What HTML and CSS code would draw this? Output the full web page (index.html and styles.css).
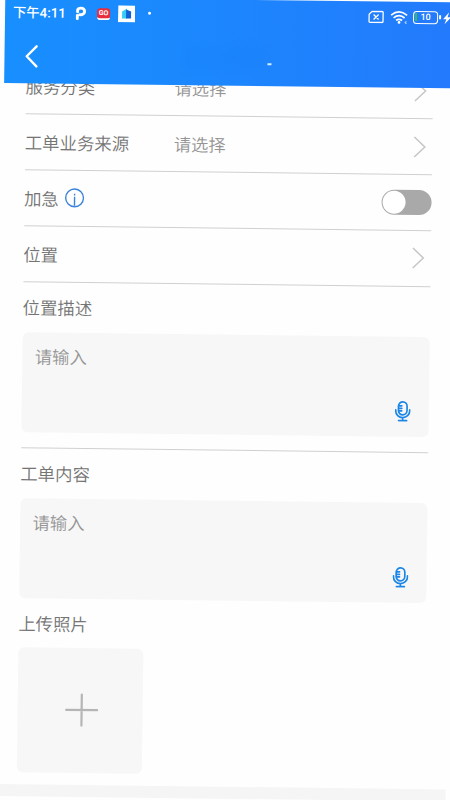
FILE: index.html
```html
<!DOCTYPE html>
<html lang="zh-CN">
<head>
<meta charset="utf-8">
<title>工单</title>
<link rel="stylesheet" href="styles.css">
</head>
<body>
<div class="screen">
  <header class="header">
    <div class="status">
      <span class="time">下午4:11</span>
      <svg class="app-p" width="12" height="15" viewBox="0 0 12 15"><path d="M2.300 12.800V9.500M2.500 6V4.500Q2.500 2.200 6 2.200a3.500 3.300 0 0 1 0 6.600H4.800" fill="none" stroke="#fff" stroke-width="2.900" stroke-linecap="round"/></svg>
      <span class="app-red">GO</span>
      <svg class="app-building" width="17" height="17" viewBox="0 0 17 17"><path fill="#fff" d="M0 0h17v17H0z"/><path fill="#35cdf5" d="M4 6l5-3v10H4z"/><path fill="#1261d4" d="M8 4l5 2v7H8z"/></svg>
      <span class="dot"></span>
      <span class="grow"></span>
      <svg class="sim" width="16" height="13" viewBox="0 0 16 13"><path d="M4 1h10q1 0 1 1v9q0 1-1 1H2q-1 0-1-1V4zM5.500 4l5 5M10.500 4l-5 5" fill="none" stroke="#fff" stroke-width="1.300"/></svg>
      <svg class="wifi" width="18" height="14" viewBox="0 0 18 14"><path d="M1 4.500q8-6.600 16 0M3.500 7.200q5.500-4.600 11 0M6 9.700q3-2.300 6 0" fill="none" stroke="#fff" stroke-width="1.700"/><circle cx="9" cy="11.700" r="1.400" fill="#fff"/><path d="M16.500 10.500l-1.500 1.300 1.500 1.300" fill="none" stroke="#b9d8ff"/></svg>
      <span class="battery">10</span>
      <svg class="bolt" width="8" height="12" viewBox="0 0 8 12"><path d="M6 0L0 7h3.300L1.500 12 8 5H4.500z" fill="#fff"/></svg>
    </div>
    <div class="navbar">
      <svg width="14" height="24" viewBox="0 0 14 24"><path d="M12 2L2.200 12 12 22" fill="none" stroke="#fff" stroke-width="2.400" stroke-linecap="round" stroke-linejoin="round"/></svg>
      <span class="smudge"></span>
      <span class="dash"></span>
    </div>
  </header>
  <main class="form">
    <div class="row"><span class="label">服务分类</span><span class="value">请选择</span>
      <svg class="arrow" width="13" height="22" viewBox="0 0 13 22"><path d="M1 1l10.500 10L1 21" /></svg></div>
    <div class="row"><span class="label">工单业务来源</span><span class="value">请选择</span>
      <svg class="arrow" width="13" height="22" viewBox="0 0 13 22"><path d="M1 1l10.500 10L1 21" /></svg></div>
    <div class="row"><span class="label urgent"><span>加急</span>
      <svg class="info" width="20" height="20" viewBox="0 0 20 20"><circle cx="10" cy="10" r="8.900"/><path d="M10 9v9M10 6v1.700"/></svg></span>
      <span class="switch"><span class="knob"></span></span></div>
    <div class="row"><span class="label">位置</span><span class="value"></span>
      <svg class="arrow" width="13" height="22" viewBox="0 0 13 22"><path d="M1 1l10.500 10L1 21" /></svg></div>
    <section class="block ruled">
      <div class="title">位置描述</div>
      <div class="input"><span>请输入</span>
        <svg class="mic" width="16" height="21" viewBox="0 0 16 21"><rect x="3.700" y="1" width="8.600" height="13" rx="4.300"/><path d="M1 9v1.200a7 6.500 0 0 0 14 0V9M8 16.700v3M4 19.800h8M4 5h3M4 7.500h3M4 10h3"/></svg></div>
    </section>
    <section class="block">
      <div class="title">工单内容</div>
      <div class="input"><span>请输入</span>
        <svg class="mic" width="16" height="21" viewBox="0 0 16 21"><rect x="3.700" y="1" width="8.600" height="13" rx="4.300"/><path d="M1 9v1.200a7 6.500 0 0 0 14 0V9M8 16.700v3M4 19.800h8M4 5h3M4 7.500h3M4 10h3"/></svg></div>
    </section>
    <section class="photos">
      <div class="title">上传照片</div>
      <div class="upload"><svg width="34" height="34" viewBox="0 0 34 34"><path d="M17 1.500v31M1.500 17h31" fill="none" stroke="#b5b5b5" stroke-width="2.200" stroke-linecap="round"/></svg></div>
    </section>
  </main>
  <div class="footer"></div>
</div>
</body>
</html>
```
FILE: styles.css
```css
* { box-sizing: border-box; }
html, body { margin: 0; height: 800px; overflow: hidden; background: #fefefe; }
body { font-family: "Noto Sans CJK SC", sans-serif; font-weight: 350; }
svg { display: block; flex: none; }

/* The whole screen is tilted slightly clockwise. */
.screen {
  width: 451px;
  height: 815px;
  transform-origin: 0 0;
  transform: matrix(1, 0.012, -0.0136, 1, 5.3, -3);
}

.header {
  position: relative;
  z-index: 1;
  height: 86px;
  background: linear-gradient(90deg, #188fff, #1c87fe 45%, #237afc);
}
.status {
  display: flex;
  align-items: center;
  height: 32px;
  padding-left: 8px;
  color: #fff;
}
.time { width: 52px; margin-top: -1px; font: 500 13.300px/18px Roboto, "Noto Sans CJK SC", sans-serif; white-space: nowrap; }
.app-p { margin: -2px 0 0 10px; }
.app-red {
  width: 13px;
  height: 12px;
  margin: -1px 0 0 10px;
  border-radius: 3px;
  border-bottom: 2px solid #fff;
  background: #e92d3c;
  font: 700 7px/10px Roboto, sans-serif;
  text-align: center;
}
.app-building { margin: -2px 0 0 8px; }
.dot { width: 3px; height: 3px; margin: -3px 0 0 13px; border-radius: 50%; background: #fff; }
.grow { flex: 1; }
.sim, .wifi, .battery, .bolt { margin-top: -1px; }
.wifi { margin-left: 6px; }
.battery {
  position: relative;
  width: 25px;
  height: 13px;
  margin-left: 5px;
  border: 1.300px solid #fff;
  border-radius: 3.500px;
  background: linear-gradient(#35bd61, #35bd61) 1px 1px / 2px 8px no-repeat;
  font: 500 9px/11px Roboto, sans-serif;
  text-align: center;
}
.battery::after { content: ""; position: absolute; right: -4px; top: 3px; width: 2px; height: 4px; background: #fff; }
.bolt { margin-left: 5px; margin-right: 5px; }
.navbar { display: flex; align-items: center; height: 53px; padding-left: 20px; }
.smudge {
  width: 82px;
  height: 25px;
  margin-left: 145px;
  background: #1681fa;
  opacity: .25;
  filter: blur(3px);
}
.dash { width: 4px; height: 2px; margin: 10px 0 0 2px; background: #d9f3ff; }

.form { margin-top: -24.400px; padding: 0 22px 0 21.500px; color: #747474; font-size: 17.400px; }
.row { display: flex; align-items: center; height: 55.750px; border-bottom: 1.200px solid #d0d0d0; }
.label { width: 149px; white-space: nowrap; }
.urgent { display: flex; align-items: center; gap: 6px; }
.value { flex: 1; color: #959595; font-size: 17.300px; }
.arrow { margin-right: 6px; fill: none; stroke: #c6c6c6; stroke-width: 1.500; }
.info { fill: none; stroke: #3a83d8; stroke-width: 1.400; }
.switch { width: 50px; height: 25px; margin-left: auto; padding: 1px; border-radius: 13px; background: #a9a9a9; }
.knob { display: block; width: 23px; height: 23px; border-radius: 50%; background: #fff; }

.block { height: 151px; }
.block.ruled { height: 166px; border-bottom: 1.200px solid #d0d0d0; }
.title { height: 50px; line-height: 49.500px; }
.input {
  display: flex;
  justify-content: space-between;
  height: 100px;
  padding: 11.500px 18px 15px 13px;
  border-radius: 6px;
  background: #f7f7f7;
  color: #959595;
  font-size: 17.300px;
  line-height: 25px;
}
.mic { align-self: flex-end; fill: none; stroke: #1c86e6; stroke-width: 1.700; stroke-linecap: round; }
.photos { height: 172px; margin-top: -1px; }
.photos .title { height: 49.500px; line-height: 49px; }
.upload {
  display: flex;
  align-items: center;
  justify-content: center;
  width: 125px;
  height: 125px;
  padding: 0 0 2px 3px;
  border-radius: 6px;
  background: #f7f7f7;
}
.footer { height: 12px; margin-top: 14px; background: #f5f5f5; }
```
